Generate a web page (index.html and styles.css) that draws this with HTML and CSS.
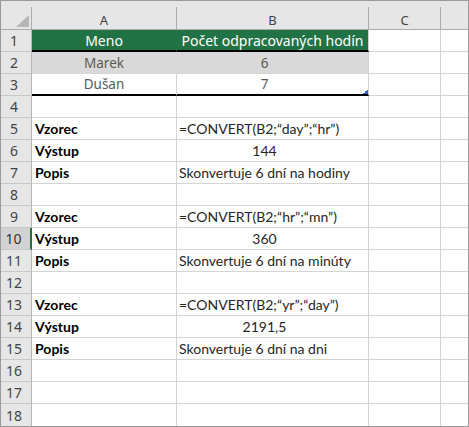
FILE: index.html
```html
<!DOCTYPE html>
<html lang="sk">
<head>
  <meta charset="UTF-8" />
  <title>CONVERT – príklad</title>
  <link rel="stylesheet" href="styles.css">
</head>
<body>
  <div class="sheet">
    <!-- hlavička stĺpcov -->
    <div class="c ch corner"><span class="tri"></span></div>
    <div class="c ch">A</div>
    <div class="c ch">B</div>
    <div class="c ch">C</div>
    <div class="c ch d"></div>

    <div class="c rh">1</div>
    <div class="c th mid">Meno</div>
    <div class="c th last mid">Počet odpracovaných hodín</div>
    <div class="c"></div>
    <div class="c d"></div>

    <div class="c rh">2</div>
    <div class="c alt mid">Marek</div>
    <div class="c alt mid num-t">6</div>
    <div class="c"></div>
    <div class="c d"></div>

    <div class="c rh">3</div>
    <div class="c rule mid">Dušan</div>
    <div class="c rule handle mid num-t">7</div>
    <div class="c"></div>
    <div class="c d"></div>

    <div class="c rh">4</div>
    <div class="c"></div>
    <div class="c"></div>
    <div class="c"></div>
    <div class="c d"></div>

    <div class="c rh">5</div>
    <div class="c lbl">Vzorec</div>
    <div class="c txt">=CONVERT(B2;“day”;“hr”)</div>
    <div class="c"></div>
    <div class="c d"></div>

    <div class="c rh">6</div>
    <div class="c lbl">Výstup</div>
    <div class="c txt num">144</div>
    <div class="c"></div>
    <div class="c d"></div>

    <div class="c rh">7</div>
    <div class="c lbl">Popis</div>
    <div class="c txt">Skonvertuje 6 dní na hodiny</div>
    <div class="c"></div>
    <div class="c d"></div>

    <div class="c rh">8</div>
    <div class="c"></div>
    <div class="c"></div>
    <div class="c"></div>
    <div class="c d"></div>

    <div class="c rh">9</div>
    <div class="c lbl">Vzorec</div>
    <div class="c txt">=CONVERT(B2;“hr”;“mn”)</div>
    <div class="c"></div>
    <div class="c d"></div>

    <div class="c rh sel">10</div>
    <div class="c lbl">Výstup</div>
    <div class="c txt num">360</div>
    <div class="c"></div>
    <div class="c d"></div>

    <div class="c rh">11</div>
    <div class="c lbl">Popis</div>
    <div class="c txt">Skonvertuje 6 dní na minúty</div>
    <div class="c"></div>
    <div class="c d"></div>

    <div class="c rh">12</div>
    <div class="c"></div>
    <div class="c"></div>
    <div class="c"></div>
    <div class="c d"></div>

    <div class="c rh">13</div>
    <div class="c lbl">Vzorec</div>
    <div class="c txt">=CONVERT(B2;“yr”;“day”)</div>
    <div class="c"></div>
    <div class="c d"></div>

    <div class="c rh">14</div>
    <div class="c lbl">Výstup</div>
    <div class="c txt num">2191,5</div>
    <div class="c"></div>
    <div class="c d"></div>

    <div class="c rh">15</div>
    <div class="c lbl">Popis</div>
    <div class="c txt">Skonvertuje 6 dní na dni</div>
    <div class="c"></div>
    <div class="c d"></div>

    <div class="c rh">16</div>
    <div class="c"></div>
    <div class="c"></div>
    <div class="c"></div>
    <div class="c d"></div>

    <div class="c rh">17</div>
    <div class="c"></div>
    <div class="c"></div>
    <div class="c"></div>
    <div class="c d"></div>

    <div class="c rh">18</div>
    <div class="c"></div>
    <div class="c"></div>
    <div class="c"></div>
    <div class="c d"></div>
  </div>
</body>
</html>
```

FILE: styles.css
```css
body {
  margin: 0;
  background: #fff;
  font-family: 'Noto Sans', 'Open Sans', sans-serif;
}

.sheet {
  display: grid;
  grid-template-columns: 31px 145px 192px 72px 27px;
  grid-template-rows: 29px repeat(18, 22px);
  width: 469px;
  height: 427px;
  border: 1px solid #9a9a9a;
  box-sizing: border-box;
  overflow: hidden;
}

.c {
  display: flex;
  align-items: center;
  box-sizing: border-box;
  border-right: 1px solid #d4d4d4;
  border-bottom: 1px solid #d4d4d4;
  white-space: nowrap;
  overflow: hidden;
  font-size: 14px;
  color: #222;
}

.d {
  border-right: 0;
}

.sheet > .c:nth-last-child(-n+5) {
  border-bottom: 0;
}

/* hlavičky */
.ch {
  background: #e6e6e6;
  justify-content: center;
  padding-top: 9px;
  font-size: 13px;
  color: #444;
  border-right: 1px solid #ababab;
  border-bottom: 1px solid #ababab;
  border-image: linear-gradient(to bottom, transparent 7px, #ababab 7px) 1;
}

.ch.d {
  border-right: 0;
}

.corner {
  justify-content: flex-end;
  align-items: flex-end;
  padding: 0 2px 2px 0;
}

.tri {
  width: 13px;
  height: 12px;
  background: #b5b5b5;
  clip-path: polygon(100% 0, 100% 100%, 0 100%);
}

.rh {
  background: #e6e6e6;
  justify-content: center;
  padding-right: 4px;
  color: #444;
  border-right-color: #b4b4b4;
  border-bottom-color: #c8c8c8;
}

.rh.sel {
  background: #d2d2d2;
  color: #333;
  border-right: 2px solid #217346;
}

/* tabuľka */
.mid {
  justify-content: center;
  font-size: 13.5px;
}

.th {
  background: #217346;
  color: #fff;
  font-size: 14px;
  border-right-color: #217346;
  border-bottom: 2px solid #000;
}

.th.last {
  border-right-color: #d4d4d4;
}

.alt {
  background: #d9d9d9;
  color: #595959;
  border-right-color: #d9d9d9;
}

.alt.num-t {
  border-right-color: #d4d4d4;
}

.rule {
  color: #595959;
  border-bottom: 2px solid #000;
}

.num-t {
  padding-right: 16px;
}

.handle {
  background: linear-gradient(to top left, #3b5fc0 50%, transparent 50%) no-repeat right bottom / 5px 5px;
}

/* popisky */
.lbl {
  font-family: Lato, sans-serif;
  font-weight: 700;
  color: #000;
  padding-left: 3px;
}

.txt {
  font-family: Lato, sans-serif;
  color: #262626;
  padding-left: 2px;
}

.num {
  justify-content: center;
  padding-left: 0;
  padding-right: 16px;
}
```
